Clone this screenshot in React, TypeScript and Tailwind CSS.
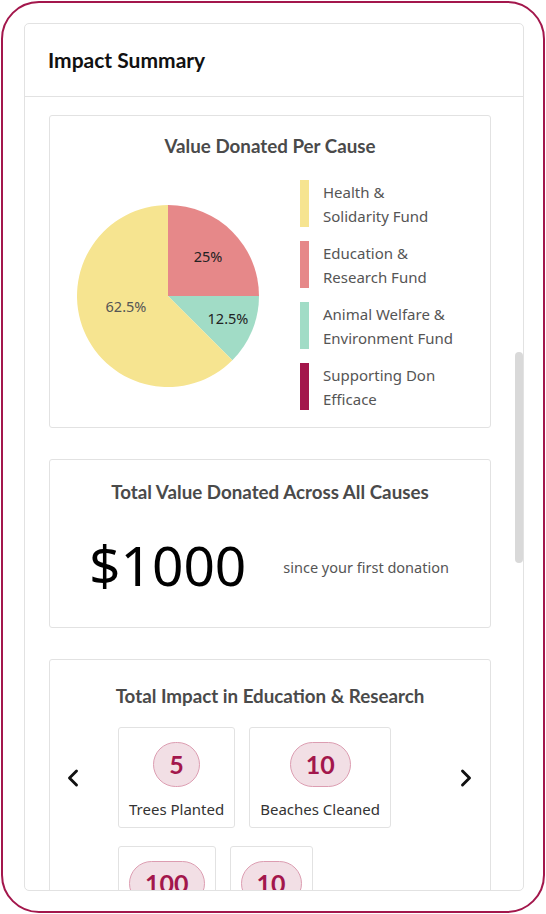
import { ChevronLeft, ChevronRight } from 'lucide-react';

const legend = [
  { color: 'bg-[#f6e490]', label: ['Health &', 'Solidarity Fund'] },
  { color: 'bg-[#e68889]', label: ['Education &', 'Research Fund'] },
  { color: 'bg-[#a1dcc6]', label: ['Animal Welfare &', 'Environment Fund'] },
  { color: 'bg-[#a3164b]', label: ['Supporting Don', 'Efficace'] },
];

const impacts = [
  { value: '5', label: 'Trees Planted' },
  { value: '10', label: 'Beaches Cleaned' },
  { value: '100', label: 'Books Given' },
  { value: '10', label: 'Schools Supported' },
];

const Pie = () => (
  <svg width="182" height="182" viewBox="0 0 182 182" className="shrink-0">
    <path d="M91 91 L91 0 A91 91 0 0 1 182 91 Z" fill="#e68889" />
    <path d="M91 91 L182 91 A91 91 0 0 1 155.35 155.35 Z" fill="#a1dcc6" />
    <path d="M91 91 L155.35 155.35 A91 91 0 1 1 91 0 Z" fill="#f6e490" />
    <text x="131" y="57" textAnchor="middle" fontSize="14.5" fill="#222" fontFamily="'Noto Sans', sans-serif">25%</text>
    <text x="151" y="119" textAnchor="middle" fontSize="14.5" fill="#222" fontFamily="'Noto Sans', sans-serif">12.5%</text>
    <text x="49" y="107" textAnchor="middle" fontSize="14.5" fill="#555" fontFamily="'Noto Sans', sans-serif">62.5%</text>
  </svg>
);

const Title = ({ children }: { children: string }) => (
  <h3 className="text-center text-[18.75px] leading-[24px] font-bold text-[#4a4a4a] font-['Lato',sans-serif]">{children}</h3>
);

const App = () => {
  return (
    <div className="w-[546px] h-[914px] bg-white p-[1px] font-['Noto_Sans',sans-serif]">
      <div className="h-full border-2 border-[#a3174c] rounded-[38px] pl-[21px] pt-[20px] pr-[19px] pb-[20px]">
        <div className="h-full border border-[#e2e2e2] rounded-[5px] flex flex-col overflow-hidden">
          <div className="h-[73px] shrink-0 border-b border-[#e2e2e2] flex items-center pl-[23px]">
            <h2 className="text-[21px] font-bold text-[#111] font-['Lato',sans-serif]">Impact Summary</h2>
          </div>
          <div className="flex-1 flex min-h-0">
            <div className="flex-1 overflow-hidden px-[24px] pt-[18px] flex flex-col gap-[31px]">
              <div className="border border-[#e2e2e2] rounded-[3px] pt-[18px] pb-[16px]">
                <Title>Value Donated Per Cause</Title>
                <div className="mt-[22px] flex items-center pl-[27px]">
                  <Pie />
                  <div className="ml-[41px] flex flex-col gap-[13px]">
                    {legend.map((l) => (
                      <div key={l.label[0]} className="flex items-start">
                        <div className={`w-[9px] h-[47px] ${l.color}`} />
                        <div className="ml-[14px] text-[15px] leading-[24px] text-[#555]">
                          <div>{l.label[0]}</div>
                          <div>{l.label[1]}</div>
                        </div>
                      </div>
                    ))}
                  </div>
                </div>
              </div>

              <div className="border border-[#e2e2e2] rounded-[3px] pt-[20px] h-[169px] shrink-0">
                <Title>Total Value Donated Across All Causes</Title>
                <div className="flex items-center pl-[39px] mt-[29px]">
                  <span className="text-[55px] leading-[64px] text-black">$1000</span>
                  <span className="ml-[37px] mt-[6px] text-[14.5px] text-[#555]">since your first donation</span>
                </div>
              </div>

              <div className="border border-[#e2e2e2] rounded-[3px] pt-[24px] shrink-0 pb-[40px]">
                <Title>Total Impact in Education &amp; Research</Title>
                <div className="mt-[19px] flex items-start">
                  <div className="w-[68px] h-[101px] flex items-center justify-start pl-[9px]">
                    <ChevronLeft size={28} strokeWidth={2.5} className="text-[#111]" />
                  </div>
                  <div className="w-[330px] flex flex-wrap gap-x-[14px] gap-y-[18px]">
                    {impacts.map((it, i) => (
                      <div key={i} className="border border-[#e2e2e2] rounded-[3px] px-[10px] pt-[14px] pb-[6px] flex flex-col items-center">
                        <div className="h-[45px] min-w-[47px] px-[15px] rounded-full bg-[#f2dfe5] border border-[#dc9db1] flex items-center justify-center text-[25px] font-bold text-[#a3174c] font-['Lato',sans-serif]">
                          {it.value}
                        </div>
                        <div className="mt-[10px] text-[15px] leading-[24px] text-[#333] whitespace-nowrap">{i > 1 ? '' : it.label}</div>
                      </div>
                    ))}
                  </div>
                  <div className="flex-1 h-[101px] flex items-center justify-end pr-[10px]">
                    <ChevronRight size={28} strokeWidth={2.5} className="text-[#111]" />
                  </div>
                </div>
              </div>
            </div>
            <div className="w-[8px] shrink-0">
              <div className="mt-[255px] h-[211px] rounded-full bg-[#d9d9d9]" />
            </div>
          </div>
        </div>
      </div>
    </div>
  );
};

export default App;
